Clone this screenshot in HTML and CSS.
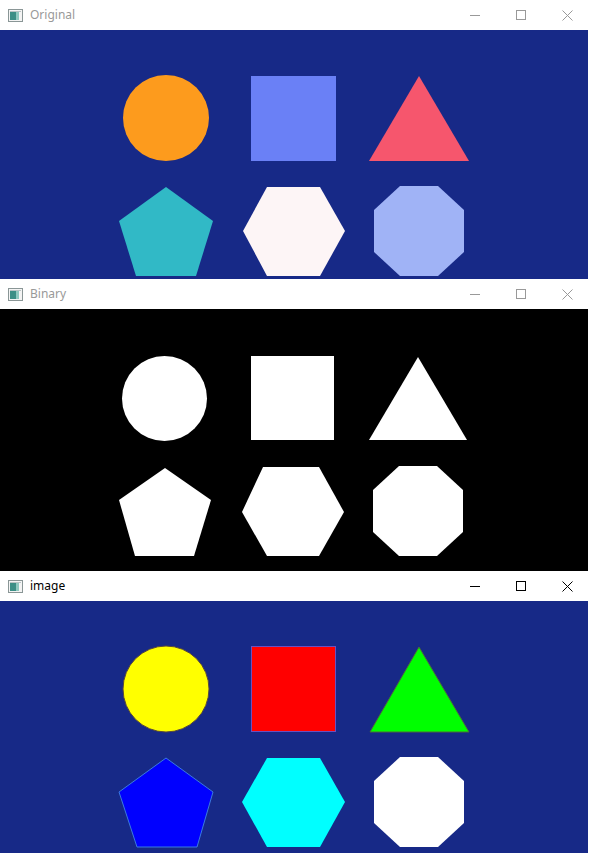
FILE: index.html
```html
<!DOCTYPE html>
<html>
<head>
<meta charset="utf-8">
<link rel="stylesheet" href="styles.css">
</head>
<body>
<div class="window inactive">
  <div class="titlebar">
    <svg class="appicon" width="15" height="13" viewBox="0 0 15 13"><rect x="0.5" y="0.5" width="14" height="12" fill="#f4f4f4" stroke="#8a9696"/><rect x="2" y="3" width="6" height="8" fill="#3c8f86"/><rect x="8" y="3" width="3" height="8" fill="#8fc9bf"/><rect x="2" y="2" width="11" height="1" fill="#b9c4c4"/></svg>
    <span class="title">Original</span>
    <div class="controls">
      <div class="btn"><span class="ic-min"></span></div>
      <div class="btn"><span class="ic-max"></span></div>
      <div class="btn"><svg width="11" height="11" viewBox="0 0 11 11"><path d="M0.5 0.5L10.5 10.5M10.5 0.5L0.5 10.5" class="xstroke"/></svg></div>
    </div>
  </div>
  <div class="content c1 navy">
    <svg width="588" height="249" viewBox="0 0 588 249">
      <circle cx="166" cy="88" r="43" fill="#fd9b1d"/>
      <rect x="251" y="46" width="85" height="85" fill="#6a80f6"/>
      <polygon points="419,46 469,131 369,131" fill="#f6566d"/>
      <polygon points="166,157 213,191 196,246 136,246 119,191" fill="#31b9c6"/>
      <polygon points="267,157 320,157 345,201 320,246 267,246 243,201" fill="#fdf5f6"/>
      <polygon points="400,156 438,156 464,180 464,222 438,246 400,246 374,222 374,180" fill="#a0b3f6"/>
    </svg>
  </div>
</div>
<div class="window inactive">
  <div class="titlebar">
    <svg class="appicon" width="15" height="13" viewBox="0 0 15 13"><rect x="0.5" y="0.5" width="14" height="12" fill="#f4f4f4" stroke="#8a9696"/><rect x="2" y="3" width="6" height="8" fill="#3c8f86"/><rect x="8" y="3" width="3" height="8" fill="#8fc9bf"/><rect x="2" y="2" width="11" height="1" fill="#b9c4c4"/></svg>
    <span class="title">Binary</span>
    <div class="controls">
      <div class="btn"><span class="ic-min"></span></div>
      <div class="btn"><span class="ic-max"></span></div>
      <div class="btn"><svg width="11" height="11" viewBox="0 0 11 11"><path d="M0.5 0.5L10.5 10.5M10.5 0.5L0.5 10.5" class="xstroke"/></svg></div>
    </div>
  </div>
  <div class="content c2 black">
    <svg width="588" height="262" viewBox="0 0 588 262">
      <circle cx="164.5" cy="89.5" r="42.5" fill="#fff"/>
      <rect x="251" y="47" width="83" height="84" fill="#fff"/>
      <polygon points="418,48 467,131 369,131" fill="#fff"/>
      <polygon points="165,159 211,191 194,247 135,247 119,191" fill="#fff"/>
      <polygon points="263,158 319,158 344,203 319,247 267,247 242,203" fill="#fff"/>
      <polygon points="399,157 437,157 463,181 463,223 437,247 399,247 373,223 373,181" fill="#fff"/>
    </svg>
  </div>
</div>
<div class="window active">
  <div class="titlebar">
    <svg class="appicon" width="15" height="13" viewBox="0 0 15 13"><rect x="0.5" y="0.5" width="14" height="12" fill="#f4f4f4" stroke="#8a9696"/><rect x="2" y="3" width="6" height="8" fill="#3c8f86"/><rect x="8" y="3" width="3" height="8" fill="#8fc9bf"/><rect x="2" y="2" width="11" height="1" fill="#b9c4c4"/></svg>
    <span class="title">image</span>
    <div class="controls">
      <div class="btn"><span class="ic-min"></span></div>
      <div class="btn"><span class="ic-max"></span></div>
      <div class="btn"><svg width="11" height="11" viewBox="0 0 11 11"><path d="M0.5 0.5L10.5 10.5M10.5 0.5L0.5 10.5" class="xstroke"/></svg></div>
    </div>
  </div>
  <div class="content c3 navy">
    <svg width="588" height="252" viewBox="0 0 588 252">
      <circle cx="166" cy="88" r="43" fill="#ffff00" stroke="#5a4a3a" stroke-width="1"/>
      <rect x="251.5" y="45.5" width="84" height="85" fill="#ff0000" stroke="#6a50c0" stroke-width="1"/>
      <polygon points="419,46 469,131 370,131" fill="#00ff00" stroke="#4a6a3a" stroke-width="1"/>
      <polygon points="166,157 213,191 197,246 137,246 119,191" fill="#0000ff" stroke="#3a7ae0" stroke-width="1"/>
      <polygon points="267,157 320,157 345,201 320,246 267,246 242,201" fill="#00ffff"/>
      <polygon points="400,156 438,156 464,180 464,222 438,246 400,246 374,222 374,180" fill="#ffffff"/>
    </svg>
  </div>
</div>
</body>
</html>
```
FILE: styles.css
```css
html, body {
  margin: 0;
  padding: 0;
  background: #ffffff;
  overflow: hidden;
}
body {
  width: 591px;
  height: 853px;
}
.window {
  width: 591px;
}
.titlebar {
  height: 30px;
  display: flex;
  align-items: center;
  background: #ffffff;
  font-family: "Segoe UI", "Noto Sans", "Open Sans", sans-serif;
  font-size: 12px;
}
.appicon {
  margin-left: 8px;
  display: block;
}
.title {
  margin-left: 7px;
  line-height: 30px;
}
.inactive .title { color: #999999; }
.active .title { color: #000000; }
.controls {
  margin-left: auto;
  display: flex;
  padding-right: 1px;
  height: 30px;
}
.btn {
  width: 46px;
  height: 30px;
  display: flex;
  align-items: center;
  justify-content: center;
}
.ic-min {
  display: block;
  width: 10px;
  height: 1px;
}
.ic-max {
  display: block;
  width: 8px;
  height: 8px;
  border: 1px solid;
}
.xstroke {
  fill: none;
  stroke-width: 1;
}
.inactive .ic-min { background: #999999; }
.inactive .ic-max { border-color: #999999; }
.inactive .xstroke { stroke: #999999; }
.active .ic-min { background: #000000; }
.active .ic-max { border-color: #000000; }
.active .xstroke { stroke: #000000; }
.content {
  width: 588px;
  overflow: hidden;
}
.content svg { display: block; }
.c1 { height: 249px; }
.c2 { height: 262px; }
.c3 { height: 252px; }
.navy { background: #172987; }
.black { background: #000000; }
```
